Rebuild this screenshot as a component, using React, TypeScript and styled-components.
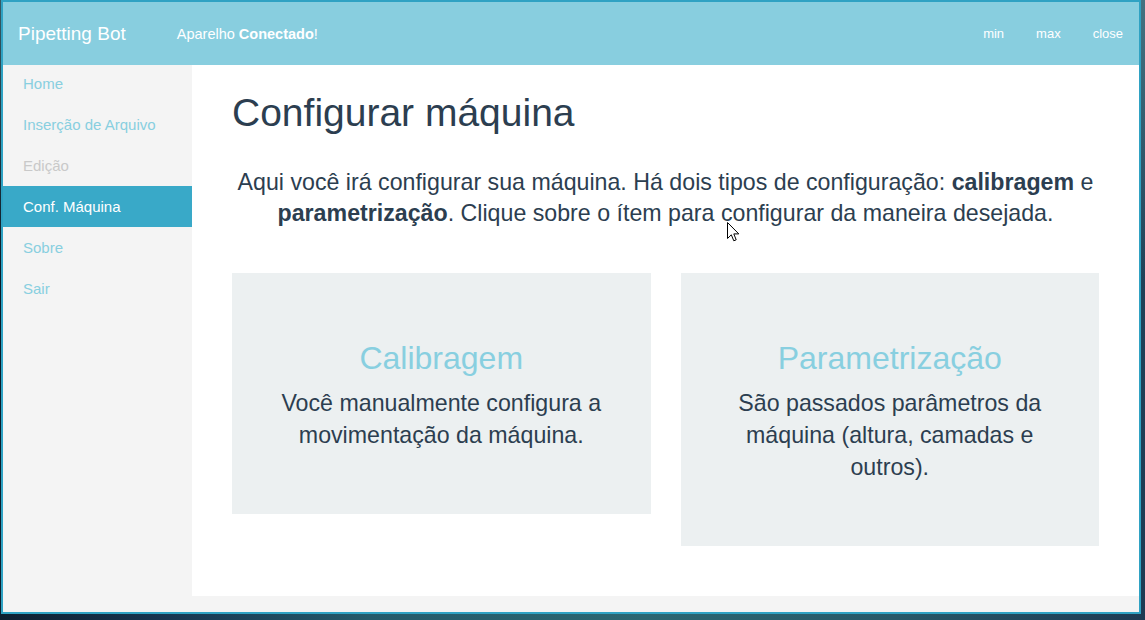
import React from "react";
import styled, { createGlobalStyle } from "styled-components";

const GlobalStyle = createGlobalStyle`
  html, body {
    margin: 0;
    padding: 0;
    width: 1145px;
    height: 620px;
    overflow: hidden;
  }
  body {
    font-family: "Liberation Sans", Arial, Helvetica, sans-serif;
    background:
      linear-gradient(to bottom, rgba(95, 150, 160, 0.55) 0%, rgba(95, 150, 160, 0) 45%),
      linear-gradient(100deg, #07111b 0%, #173550 22%, #245a6a 38%, #2b6671 60%, #275868 80%, #1d3a53 100%);
    position: relative;
  }
  #root { width: 100%; height: 100%; }
`;

const Window = styled.div`
  box-sizing: border-box;
  margin-left: 1px;
  width: 1140px;
  height: 614px;
  border: 2px solid #2fa2c3;
  display: flex;
  flex-direction: column;
  background: #f4f4f4;
`;

const Header = styled.header`
  height: 63px;
  flex: none;
  background: #88cedf;
  color: #ffffff;
  display: flex;
  align-items: center;
  padding-left: 15px;
`;

const Brand = styled.div`
  font-size: 19px;
  margin-right: 51px;
`;

const Status = styled.div`
  font-size: 14.5px;
  b { font-weight: bold; }
`;

const Controls = styled.nav`
  margin-left: auto;
  display: flex;
  height: 100%;
`;

const Control = styled.span`
  display: flex;
  align-items: center;
  padding: 0 16px;
  font-size: 13px;
  color: #ffffff;
`;

const Body = styled.div`
  flex: 1;
  display: grid;
  grid-template-columns: 189px 1fr;
  min-height: 0;
`;

const Sidebar = styled.aside`
  background: #f4f4f4;
`;

const NavList = styled.ul`
  list-style: none;
  margin: -2px 0 0;
  padding: 0;
`;

const NavItem = styled.li<{ $active?: boolean; $disabled?: boolean }>`
  height: 41px;
  display: flex;
  align-items: center;
  padding-left: 20px;
  font-size: 15px;
  background: ${(p) => (p.$active ? "#39a9c8" : "transparent")};
  color: ${(p) => (p.$active ? "#ffffff" : p.$disabled ? "#c9c9c9" : "#88cfe0")};
`;

const Main = styled.main`
  padding-bottom: 16px;
  display: flex;
  flex-direction: column;
`;

const Panel = styled.section`
  flex: 1;
  background: #ffffff;
  padding: 27px 40px 0;
  color: #2c3e50;
`;

const Title = styled.h1`
  margin: 0;
  font-size: 39px;
  line-height: 1.1;
  font-weight: normal;
`;

const Lead = styled.p`
  margin: 32px 0 0;
  font-size: 23.2px;
  line-height: 31.5px;
  text-align: center;
  b { font-weight: bold; }
`;

const Cards = styled.div`
  margin-top: 43px;
  display: flex;
  gap: 30px;
  align-items: flex-start;
`;

const Card = styled.div`
  flex: 1;
  background: #ecf0f1;
  padding: 68px 40px 63px;
  text-align: center;
`;

const CardTitle = styled.h2`
  margin: 0 0 10.5px;
  font-size: 32px;
  line-height: 1.1;
  font-weight: normal;
  color: #88cfe0;
`;

const CardText = styled.p`
  margin: 0;
  font-size: 23.2px;
  line-height: 32px;
  color: #2c3e50;
`;

const Cursor = styled.svg`
  position: absolute;
  left: 727px;
  top: 222px;
`;

const navItems = [
  { label: "Home" },
  { label: "Inserção de Arquivo" },
  { label: "Edição", disabled: true },
  { label: "Conf. Máquina", active: true },
  { label: "Sobre" },
  { label: "Sair" },
];

export default function App() {
  return (
    <>
      <GlobalStyle />
      <Window>
        <Header>
          <Brand>Pipetting Bot</Brand>
          <Status>
            Aparelho <b>Conectado</b>!
          </Status>
          <Controls>
            <Control>min</Control>
            <Control>max</Control>
            <Control>close</Control>
          </Controls>
        </Header>
        <Body>
          <Sidebar>
            <NavList>
              {navItems.map((item) => (
                <NavItem key={item.label} $active={item.active} $disabled={item.disabled}>
                  {item.label}
                </NavItem>
              ))}
            </NavList>
          </Sidebar>
          <Main>
            <Panel>
              <Title>Configurar máquina</Title>
              <Lead>
                Aqui você irá configurar sua máquina. Há dois tipos de configuração: <b>calibragem</b> e{" "}
                <b>parametrização</b>. Clique sobre o ítem para configurar da maneira desejada.
              </Lead>
              <Cards>
                <Card>
                  <CardTitle>Calibragem</CardTitle>
                  <CardText>Você manualmente configura a movimentação da máquina.</CardText>
                </Card>
                <Card>
                  <CardTitle>Parametrização</CardTitle>
                  <CardText>São passados parâmetros da máquina (altura, camadas e outros).</CardText>
                </Card>
              </Cards>
            </Panel>
          </Main>
        </Body>
      </Window>
      <Cursor width="13" height="21" viewBox="0 0 13 21">
        <path
          d="M0.5 0.5 L0.5 16.5 L4.3 12.8 L6.8 18.8 L9.2 17.8 L6.8 11.9 L11.8 11.9 Z"
          fill="#ffffff"
          stroke="#000000"
          strokeWidth="1"
          strokeLinejoin="miter"
        />
      </Cursor>
    </>
  );
}
